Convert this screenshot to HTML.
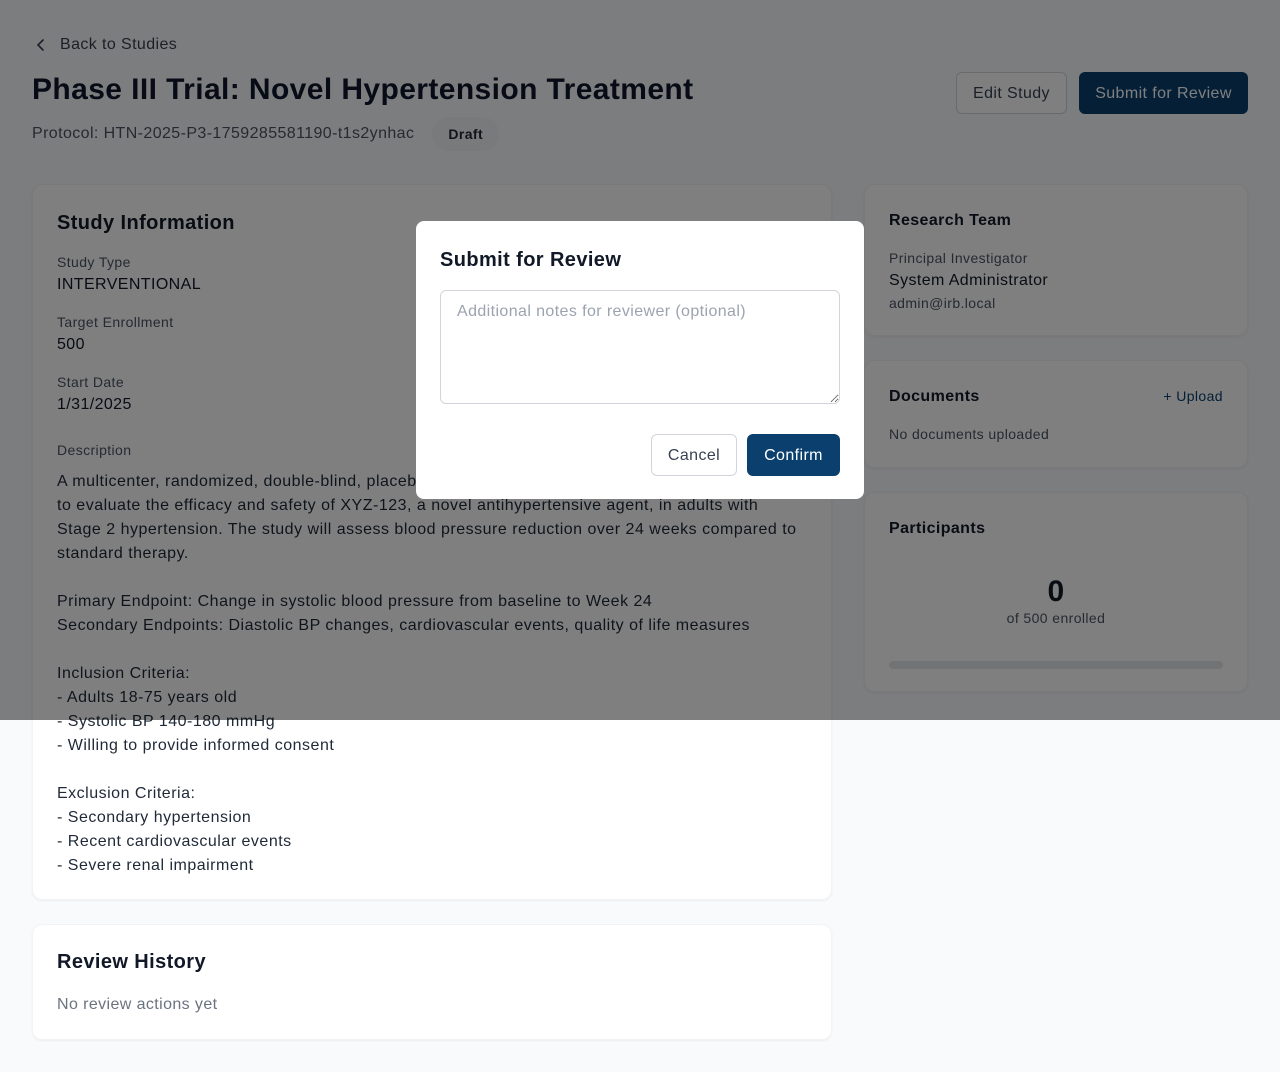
<!DOCTYPE html>
<html><head><meta charset="utf-8"><style>
*{box-sizing:border-box;margin:0;padding:0}
body{width:1280px;height:1072px;background:#f8fafc;font-family:"Liberation Sans",sans-serif;color:#111827;position:relative;overflow:hidden;letter-spacing:0.4px}
.back{position:absolute;left:34px;top:36px;font-size:16px;color:#374151;display:flex;align-items:center;gap:12px}
h1{position:absolute;left:32px;top:73px;font-size:30px;font-weight:700;color:#0f172a;letter-spacing:0.4px}
.proto{position:absolute;left:32px;top:117px;font-size:16px;color:#4b5563;display:flex;align-items:center;height:34px}
.badge{margin-left:18px;background:#f3f4f6;border-radius:17px;padding:9px 16px;font-size:14px;font-weight:600;color:#1f2937}
.btn{position:absolute;top:72px;height:42px;border-radius:6px;font-size:16px;display:flex;align-items:center;justify-content:center;padding-top:2px}
.edit{left:956px;width:111px;border:1px solid #d1d5db;background:#fff;color:#374151}
.sub{left:1079px;width:169px;background:#0b3f6e;color:#fff}
.card{position:absolute;background:#fff;border-radius:10px;box-shadow:0 1px 2px rgba(0,0,0,.05);border:1px solid #f1f3f5}
.h2{font-size:20px;font-weight:700;color:#111827}
.h3{font-size:16px;font-weight:700;color:#111827}
.lbl{font-size:14px;color:#4b5563;line-height:18px}
.val{font-size:16px;font-weight:500;color:#111827;margin-top:3px;line-height:22px}
.desc{font-size:16px;line-height:24px;color:#1f2937;white-space:pre-line;margin-top:11px;letter-spacing:0.5px}
.ov{position:absolute;left:0;top:0;width:1280px;height:720px;background:rgba(0,0,0,.5)}
.modal{position:absolute;left:416px;top:221px;width:448px;height:278px;background:#fff;border-radius:8px;padding:24px}
textarea{display:block;margin-top:18px;width:400px;height:114px;border:1px solid #d1d5db;border-radius:6px;padding:12px 16px;font-family:inherit;font-size:16px;resize:vertical;letter-spacing:0.4px}
textarea::placeholder{color:#9ca3af}
</style></head><body>
<div class="back"><svg width="14" height="14" viewBox="0 0 14 14"><path d="M9 2L4 7l5 5" fill="none" stroke="#374151" stroke-width="1.6" stroke-linecap="round"/></svg>Back to Studies</div>
<h1>Phase III Trial: Novel Hypertension Treatment</h1>
<div class="proto">Protocol: HTN-2025-P3-1759285581190-t1s2ynhac<span class="badge">Draft</span></div>
<div class="btn edit">Edit Study</div>
<div class="btn sub">Submit for Review</div>

<div class="card" style="left:32px;top:184px;width:800px;height:716px;padding:24px">
<div class="h2" style="margin-top:3px">Study Information</div>
<div class="lbl" style="margin-top:18px">Study Type</div><div class="val">INTERVENTIONAL</div>
<div class="lbl" style="margin-top:17px">Target Enrollment</div><div class="val">500</div>
<div class="lbl" style="margin-top:17px">Start Date</div><div class="val">1/31/2025</div>
<div class="lbl" style="margin-top:25px">Description</div>
<div class="desc">A multicenter, randomized, double-blind, placebo-controlled Phase III clinical trial designed
to evaluate the efficacy and safety of XYZ-123, a novel antihypertensive agent, in adults with
Stage 2 hypertension. The study will assess blood pressure reduction over 24 weeks compared to
standard therapy.

Primary Endpoint: Change in systolic blood pressure from baseline to Week 24
Secondary Endpoints: Diastolic BP changes, cardiovascular events, quality of life measures

Inclusion Criteria:
- Adults 18-75 years old
- Systolic BP 140-180 mmHg
- Willing to provide informed consent

Exclusion Criteria:
- Secondary hypertension
- Recent cardiovascular events
- Severe renal impairment</div>
</div>
<div class="card" style="left:32px;top:924px;width:800px;height:116px;padding:24px">
<div class="h2" style="margin-top:2px">Review History</div>
<div style="margin-top:22px;font-size:16px;color:#6b7280">No review actions yet</div>
</div>

<div class="card" style="left:864px;top:184px;width:384px;height:152px;padding:24px">
<div class="h3" style="margin-top:3px">Research Team</div>
<div class="lbl" style="margin-top:19px">Principal Investigator</div>
<div class="val" style="margin-top:3px">System Administrator</div>
<div class="lbl" style="margin-top:2px">admin@irb.local</div>
</div>
<div class="card" style="left:864px;top:360px;width:384px;height:108px;padding:24px">
<div style="display:flex;justify-content:space-between;margin-top:3px"><span class="h3">Documents</span><span style="font-size:14px;color:#0b3f6e">+ Upload</span></div>
<div class="lbl" style="margin-top:19px">No documents uploaded</div>
</div>
<div class="card" style="left:864px;top:492px;width:384px;height:200px;padding:24px">
<div class="h3" style="margin-top:3px">Participants</div>
<div style="text-align:center;font-size:30px;font-weight:700;margin-top:36px;line-height:36px">0</div>
<div style="text-align:center;font-size:14px;color:#4b5563;margin-top:0px">of 500 enrolled</div>
<div style="margin-top:35px;height:8px;border-radius:4px;background:#e5e7eb"></div>
</div>

<div class="ov"></div>
<div class="modal">
<div style="font-size:20px;font-weight:700;margin-top:4px">Submit for Review</div>
<textarea placeholder="Additional notes for reviewer (optional)"></textarea>
<div style="display:flex;justify-content:flex-end;gap:10px;margin-top:30px">
<div style="width:86px;height:42px;border:1px solid #d1d5db;border-radius:6px;display:flex;align-items:center;justify-content:center;font-size:16px;color:#374151;padding-top:2px">Cancel</div>
<div style="width:93px;height:42px;background:#0b3f6e;border-radius:6px;display:flex;align-items:center;justify-content:center;font-size:16px;color:#fff;font-weight:500;padding-top:2px">Confirm</div>
</div>
</div>
</body></html>
